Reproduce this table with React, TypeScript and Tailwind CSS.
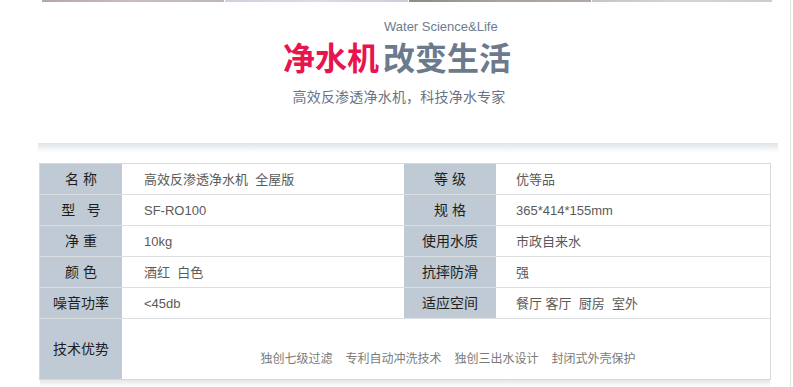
import React from "react";

const font = { fontFamily: '"Liberation Sans", "Noto Sans CJK SC", sans-serif' };

type Row = { l1: string; v1: string; l2: string; v2: string };

const rows: Row[] = [
  { l1: "名 称", v1: "高效反渗透净水机  全屋版", l2: "等 级", v2: "优等品" },
  { l1: "型   号", v1: "SF-RO100", l2: "规 格", v2: "365*414*155mm" },
  { l1: "净 重", v1: "10kg", l2: "使用水质", v2: "市政自来水" },
  { l1: "颜 色", v1: "酒红  白色", l2: "抗摔防滑", v2: "强" },
  { l1: "噪音功率", v1: "<45db", l2: "适应空间", v2: "餐厅 客厅  厨房  室外" },
];

export default function App() {
  return (
    <div className="w-[793px] h-[387px] overflow-hidden bg-white" style={font}>
      <div className="w-[791px] h-[387px] border-r border-[#e4e4e4] flex flex-col">
        {/* top image strip */}
        <div className="flex gap-px ml-[42px] h-[2px]">
          <div className="w-[182px] h-full bg-gradient-to-r from-[#b4a6ae] via-[#c9bcc3] to-[#bfb6bd]" />
          <div className="w-[183px] h-full bg-gradient-to-r from-[#cdd2dc] via-[#d8dce4] to-[#c9ced8]" />
          <div className="w-[182px] h-full bg-gradient-to-r from-[#8f8a84] via-[#a9a39c] to-[#b0a8a4]" />
          <div className="w-[180px] h-full bg-gradient-to-r from-[#c8c3cb] via-[#d6d3da] to-[#cfcad2]" />
        </div>

        {/* heading */}
        <div className="pl-[384px] mt-[17px] text-[13px] leading-[16px] text-[#6d7c90]">
          Water Science&amp;Life
        </div>
        <div
          className="flex justify-center mt-[4px] pl-[4px] text-[32px] leading-[34px] font-bold"
          style={{ fontFamily: '"Noto Sans CJK SC", sans-serif' }}
        >
          <span className="text-[#e8144e]">净水机</span>
          <span className="ml-[4px] text-[#6c7a8d]">改变生活</span>
        </div>
        <div
          className="flex justify-center mt-[14px] pl-[8px] text-[14px] leading-[18px] tracking-[0.2px] text-[#6a7384]"
          style={{ fontFamily: '"Noto Sans CJK SC", sans-serif' }}
        >
          高效反渗透净水机，科技净水专家
        </div>

        {/* shadow band */}
        <div className="ml-[38px] mt-[38px] w-[740px] h-[11px] bg-gradient-to-b from-[#dfe3e8] via-[#f1f3f5] to-white" />

        {/* table */}
        <div className="ml-[39px] mt-[10px] w-[732px] border border-[#d8d8d8]">
          {rows.map((r, i) => (
            <div key={i} className="grid grid-cols-[82px_282px_92px_274px] h-[31px] border-b border-[#dcdfe2]">
              <div className="bg-[#bfcad4] flex items-center justify-center text-[14px] text-[#1e1e1e] whitespace-pre">
                {r.l1}
              </div>
              <div className="flex items-center pl-[22px] text-[13px] text-[#5a5a5a] whitespace-pre">{r.v1}</div>
              <div className="bg-[#bfcad4] flex items-center justify-center text-[14px] text-[#1e1e1e] whitespace-pre">
                {r.l2}
              </div>
              <div className="flex items-center pl-[20px] text-[13px] text-[#5a5a5a] whitespace-pre">{r.v2}</div>
            </div>
          ))}
          <div className="grid grid-cols-[82px_648px] h-[60px]">
            <div className="bg-[#bfcad4] flex items-center justify-center text-[14px] text-[#1e1e1e]">技术优势</div>
            <div className="flex items-end justify-center pb-[12px] pl-[4px] gap-[13px] text-[12px] leading-[16px] text-[#7a7a7a]">
              <span>独创七级过滤</span>
              <span>专利自动冲洗技术</span>
              <span>独创三出水设计</span>
              <span>封闭式外壳保护</span>
            </div>
          </div>
        </div>
        <div className="ml-[40px] w-[730px] h-[7px] bg-gradient-to-b from-[#e6e6e6] to-white" />
      </div>
    </div>
  );
}
